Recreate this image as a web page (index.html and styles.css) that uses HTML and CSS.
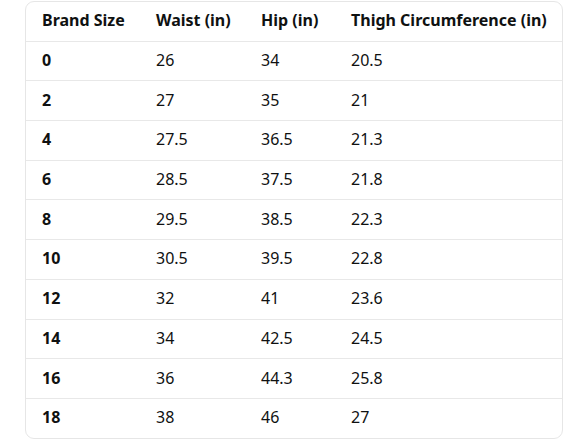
FILE: index.html
```html
<!DOCTYPE html>
<html>
<head>
<meta charset="utf-8">
<link rel="stylesheet" href="styles.css">
</head>
<body>
<div class="card">
<table class="sizes">
<colgroup><col class="c1"><col class="c2"><col class="c3"><col class="c4"></colgroup>
<thead>
<tr><th>Brand Size</th><th>Waist (in)</th><th>Hip (in)</th><th>Thigh Circumference (in)</th></tr>
</thead>
<tbody>
<tr><td class="b">0</td><td>26</td><td>34</td><td>20.5</td></tr>
<tr><td class="b">2</td><td>27</td><td>35</td><td>21</td></tr>
<tr><td class="b">4</td><td>27.5</td><td>36.5</td><td>21.3</td></tr>
<tr><td class="b">6</td><td>28.5</td><td>37.5</td><td>21.8</td></tr>
<tr><td class="b">8</td><td>29.5</td><td>38.5</td><td>22.3</td></tr>
<tr><td class="b">10</td><td>30.5</td><td>39.5</td><td>22.8</td></tr>
<tr><td class="b">12</td><td>32</td><td>41</td><td>23.6</td></tr>
<tr><td class="b">14</td><td>34</td><td>42.5</td><td>24.5</td></tr>
<tr><td class="b">16</td><td>36</td><td>44.3</td><td>25.8</td></tr>
<tr><td class="b">18</td><td>38</td><td>46</td><td>27</td></tr>
</tbody>
</table>
</div>
</body>
</html>
```
FILE: styles.css
```css
html, body { margin: 0; padding: 0; background: #fff; }
body {
  font-family: "Noto Sans", "Open Sans", sans-serif;
  font-size: 16px;
  color: #0f1111;
}
.card {
  margin: 1px 0 0 25px;
  width: 536px;
  border: 1px solid #e6e6e6;
  border-radius: 9px;
  overflow: hidden;
}
.sizes {
  width: 100%;
  border-collapse: collapse;
  table-layout: fixed;
}
.c1 { width: 114px; }
.c2 { width: 105px; }
.c3 { width: 90px; }
.c4 { width: auto; }
.sizes th, .sizes td {
  text-align: left;
  padding: 0 0 2px 16px;
  height: 36.7px;
  line-height: 20px;
  vertical-align: middle;
  border-bottom: 1px solid #e8e8e8;
  white-space: nowrap;
}
.sizes th { font-weight: 700; }
.sizes td.b { font-weight: 700; }
.sizes tbody tr:last-child td { border-bottom: none; }
```
